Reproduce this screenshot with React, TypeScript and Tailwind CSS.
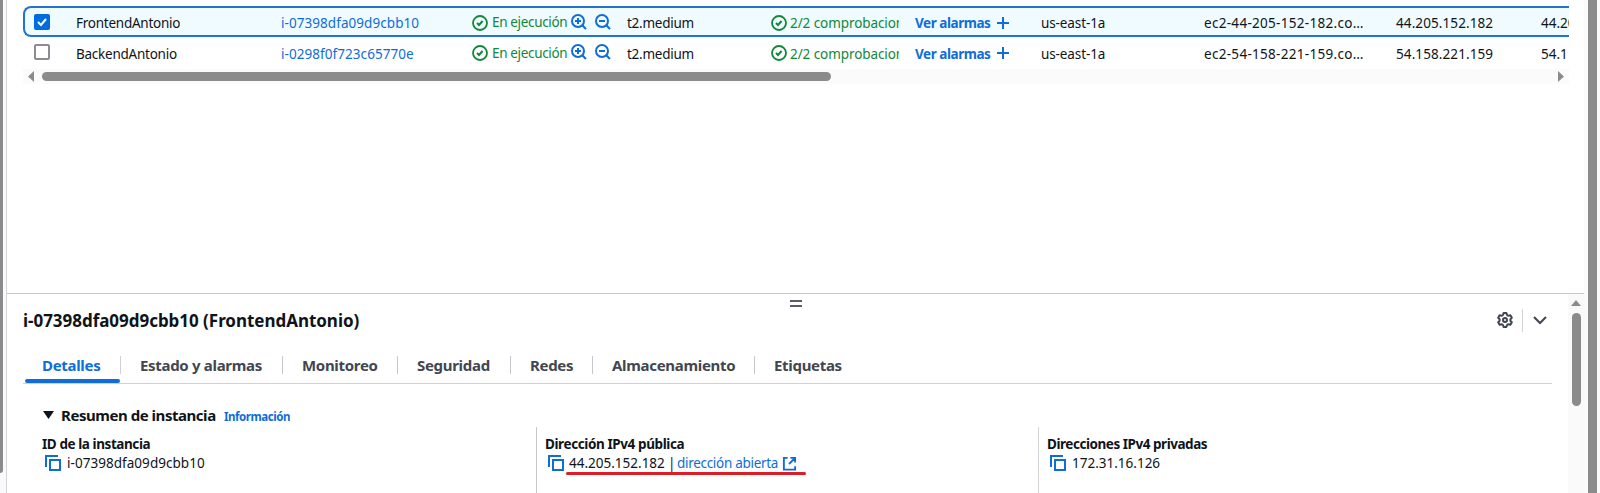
import React from "react";

type P = { className?: string; children?: React.ReactNode };

const Svg = ({ className = "", children }: P) => (
  <svg viewBox="0 0 16 16" fill="none" stroke="currentColor" strokeWidth="2" className={`size-4 shrink-0 ${className}`}>
    {children}
  </svg>
);

const CheckCircle = () => (
  <Svg className="text-[#12873a]">
    <circle cx="8" cy="8" r="7" strokeWidth="1.8" />
    <path d="m5 8 2 2 3.6-4" />
  </Svg>
);
const Zoom = ({ plus }: { plus?: boolean }) => (
  <Svg className="-translate-y-px text-[#0f6cd8]">
    <circle cx="7" cy="7" r="6" />
    <path d="m11 11 4 4M4 7h6" />
    {plus && <path d="M7 4v6" />}
  </Svg>
);
const Copy = () => (
  <Svg className="text-[#0f6cd8]">
    <path d="M5 5h10v10H5z" />
    <path d="M1 12V1h12" />
  </Svg>
);
const External = () => (
  <svg viewBox="0 0 16 16" fill="none" stroke="currentColor" strokeWidth="2" className="size-[15px] shrink-0 text-[#0f6cd8]">
    <path d="M6 2H2v12.500h12V11M9 2h5v5M14 2 7.500 8.500" />
  </svg>
);

const rows = [
  { name: "FrontendAntonio", id: "i-07398dfa09d9cbb10", dns: "ec2-44-205-152-182.co…", ip: "44.205.152.182", ip2: "44.205.152.182", on: true },
  { name: "BackendAntonio", id: "i-0298f0f723c65770e", dns: "ec2-54-158-221-159.co…", ip: "54.158.221.159", ip2: "54.1", on: false },
];

const Row = ({ r }: { r: (typeof rows)[number] }) => (
  <div
    className={
      "flex h-[31px] items-center overflow-hidden text-[13.5px] whitespace-nowrap " +
      (r.on ? "rounded-l-lg border-2 border-r-0 border-[#2374cb] bg-[#f0fbff] pl-[9px] pt-0.5" : "pl-[11px] pt-px")
    }
  >
    <div className="w-[42px] shrink-0">
      {r.on ? (
        <div className="flex size-4 -translate-y-px items-center justify-center rounded-[2px] bg-[#006ce0] text-white">
          <Svg><path d="m4 8 3 3 5-6" /></Svg>
        </div>
      ) : (
        <div className="size-4 -translate-y-px rounded-[2px] border-2 border-[#8c8c94] bg-white" />
      )}
    </div>
    <div className="w-[205px] shrink-0 pt-0.5 tracking-[-0.25px]">{r.name}</div>
    <div className="w-[191px] shrink-0 pt-0.5 tracking-[0.06px] text-[#0f6cd8]">{r.id}</div>
    <div className="flex w-[155px] shrink-0 items-center text-[#12873a]">
      <CheckCircle />
      <span className="ml-1 w-[79px] tracking-[-0.34px]">En ejecución</span>
      <Zoom plus />
      <span className="w-2" />
      <Zoom />
    </div>
    <div className="w-[144px] shrink-0 pt-0.5 tracking-[-0.25px]">t2.medium</div>
    <div className="flex w-[144px] shrink-0 items-center text-[#12873a]">
      <CheckCircle />
      <span className="ml-[3px] w-[109px] overflow-hidden pt-0.5 tracking-[-0.08px]">2/2 comprobaciones</span>
    </div>
    <div className="flex w-[126px] shrink-0 items-center font-bold text-[#0f6cd8]">
      <span className="w-[80px] pt-0.5 tracking-[-0.45px]">Ver alarmas</span>
      <Svg><path d="M8 2v12M2 8h12" /></Svg>
    </div>
    <div className="w-[163px] shrink-0 pt-0.5 tracking-[-0.1px]">us-east-1a</div>
    <div className="w-[192px] shrink-0 pt-0.5 tracking-[0.3px]">{r.dns}</div>
    <div className="w-[145px] shrink-0 pt-0.5 tracking-[0.1px]">{r.ip}</div>
    <div className="pt-0.5">{r.ip2}</div>
  </div>
);

const Tab = ({ className = "", children }: P) => (
  <div className={`flex h-[18px] shrink-0 items-center border-[#c6c6cd] pl-[19px] ${className}`}>{children}</div>
);

export default function App() {
  return (
    <div className="flex h-[493px] w-[1600px] overflow-hidden bg-white font-['Noto_Sans',sans-serif] text-[#0f141a]">
      <div className="h-full w-[6px] shrink-0 bg-[#fafafa]">
        <div className="h-[473px] w-[3px] rounded-br bg-[#8b8b8b]" />
      </div>
      <div className="flex w-[1578px] shrink-0 flex-col border-l border-[#d4d4da]">
        <div className="h-[293px] shrink-0 pl-4 pt-[6px]">
          <div className="w-[1546px]">
            {rows.map((r) => <Row key={r.id} r={r} />)}
            <div className="mt-px flex h-[15px] items-center bg-[#fbfbfb] pl-[5px]">
              <svg className="h-[11px] w-[6px]" viewBox="0 0 6 11"><path d="M6 0v11L0 5.5z" fill="#8b8b8b" /></svg>
              <div className="ml-2 h-[9px] w-[789px] rounded-full bg-[#8b8b8b]" />
              <svg className="ml-auto mr-[5px] h-[11px] w-[6px]" viewBox="0 0 6 11"><path d="M0 0v11l6-5.5z" fill="#8b8b8b" /></svg>
            </div>
          </div>
        </div>
        <div className="flex h-[200px] shrink-0 border-t border-[#c6c6cd]">
          <div className="w-[1561px] shrink-0 overflow-hidden pl-4">
            <div className="ml-[767px] mt-[6px] h-[7px] w-3 border-y-2 border-[#5a5d66]" />
            <div className="mt-[2px] flex h-[22px] items-center">
              <div className="w-[1474px] whitespace-nowrap pt-0.5 text-[17px] font-bold tracking-[-0.03px]">i-07398dfa09d9cbb10 (FrontendAntonio)</div>
              <Svg className="text-[#424650]">
                <path d="M6.600 1h2.800l.6 2 1.400.8 2-.5 1.400 2.400L13.400 7.200v1.600l1.400 1.500-1.400 2.400-2-.5-1.400.8-.6 2H6.600l-.6-2-1.400-.8-2 .5L1.200 10.300 2.600 8.800V7.200L1.200 5.700l1.400-2.400 2 .5L6 3z" strokeLinejoin="round" />
                <circle cx="8" cy="8" r="2" />
              </Svg>
              <div className="ml-[9px] h-[23px] w-px bg-[#d0d0d6]" />
              <Svg className="ml-[9px] text-[#424650]"><path d="m2 5 6 6 6-6" /></Svg>
            </div>
            <div className="mt-[25px] h-[28px] w-[1529px] border-b border-[#d0d0d6] text-[15px] font-bold whitespace-nowrap text-[#424650]">
              <div className="flex tracking-[-0.31px]">
                <div className="relative flex h-[18px] w-[98px] items-center border-r border-[#d0d0d6] pl-[19px] text-[#0f6cd8]">
                  Detalles
                  <div className="absolute -bottom-[9px] left-[2px] h-1 w-[95px] rounded-full bg-[#0f6cd8]" />
                </div>
                <Tab className="w-[162px] border-r">Estado y alarmas</Tab>
                <Tab className="w-[115px] border-r">Monitoreo</Tab>
                <Tab className="w-[113px] border-r">Seguridad</Tab>
                <Tab className="w-[82px] border-r">Redes</Tab>
                <Tab className="w-[162px] border-r">Almacenamiento</Tab>
                <Tab>Etiquetas</Tab>
              </div>
            </div>
            <div className="mt-[21px] flex h-5 items-center whitespace-nowrap pl-[20px] font-bold">
              <svg className="h-2 w-[11px]" viewBox="0 0 10 8" preserveAspectRatio="none"><path d="M0 0h10L5 8z" fill="#0f141a" /></svg>
              <span className="ml-[7px] w-[163px] text-[15px] tracking-[-0.46px]">Resumen de instancia</span>
              <span className="pt-[3px] text-[11.5px] tracking-[-0.45px] text-[#0f6cd8]">Información</span>
            </div>
            <div className="mt-[2px] flex h-[80px] text-[13.5px] whitespace-nowrap">
              <div className="w-[513px] pl-[19px] pt-[7px]">
                <div className="h-[19px] font-bold leading-5 tracking-[-0.42px]">ID de la instancia</div>
                <div className="flex h-5 items-center pl-[3px]"><Copy /><span className="ml-[6px] tracking-[0.04px]">i-07398dfa09d9cbb10</span></div>
                <div className="mt-[16px] font-bold leading-5 tracking-[-0.46px]">Dirección IPv6</div>
              </div>
              <div className="w-[502px] border-l border-[#c6c6cd] pl-2 pt-[7px]">
                <div className="h-[19px] font-bold leading-5 tracking-[-0.4px]">Dirección IPv4 pública</div>
                <div className="relative flex h-5 items-center pl-[3px]">
                  <Copy /><span className="ml-[5px] w-[99px]">44.205.152.182</span>
                  <span className="w-[9px]">|</span>
                  <span className="w-[105px] tracking-[-0.3px] text-[#0f6cd8]">dirección abierta</span>
                  <External />
                  <div className="absolute left-[21px] top-[19px] h-[3px] w-[240px] rounded-full bg-[#dc1f26]" />
                </div>
              </div>
              <div className="border-l border-[#d4d4da] pl-2 pt-[7px]">
                <div className="h-[19px] font-bold leading-5 tracking-[-0.46px]">Direcciones IPv4 privadas</div>
                <div className="flex h-5 items-center pl-[3px]"><Copy /><span className="ml-[6px]">172.31.16.126</span></div>
                <div className="mt-[16px] font-bold leading-5 tracking-[-0.46px]">DNS de IPv4 pública</div>
              </div>
            </div>
          </div>
          <div className="flex w-4 shrink-0 flex-col items-center bg-[#fafafa] pt-[6px]">
            <svg className="h-[6px] w-[10px]" viewBox="0 0 10 6"><path d="M0 6h10L5 0z" fill="#8b8b8b" /></svg>
            <div className="mt-[7px] h-[93px] w-[9px] rounded-full bg-[#8b8b8b]" />
          </div>
        </div>
      </div>
      <div className="w-4 shrink-0 bg-[#fafafa] pl-1"><div className="h-full w-[9px] bg-[#8b8b8b]" /></div>
    </div>
  );
}
